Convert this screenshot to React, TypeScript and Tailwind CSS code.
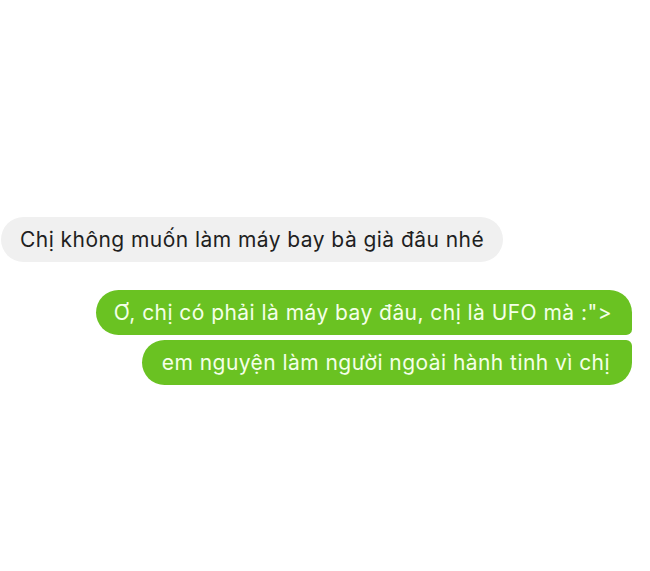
export default function App() {
  return (
    <div className="w-[650px] h-[571px] bg-white font-['Inter','Liberation_Sans',sans-serif] text-[21px] leading-none tracking-[0.45px]">
      <div className="pt-[217px] pl-[1px]">
        <div className="inline-flex items-center h-[45px] px-[19px] rounded-[23px] bg-[#f0f0f0] text-[#1f1f1f]">
          Chị không muốn làm máy bay bà già đâu nhé
        </div>
      </div>
      <div className="flex flex-col items-end gap-[5px] pr-[18px] mt-[28px]">
        <div className="flex items-center h-[45px] pl-[18px] pr-[20px] rounded-l-[23px] rounded-tr-[23px] rounded-br-[6px] bg-[#6ac222] text-[#f4ffe8]">
          Ơ, chị có phải là máy bay đâu, chị là UFO mà :"&gt;
        </div>
        <div className="flex items-center h-[45px] pl-[20px] pr-[22px] rounded-l-[23px] rounded-br-[23px] rounded-tr-[6px] bg-[#6ac222] text-[#f4ffe8]">
          em nguyện làm người ngoài hành tinh vì chị
        </div>
      </div>
    </div>
  );
}
